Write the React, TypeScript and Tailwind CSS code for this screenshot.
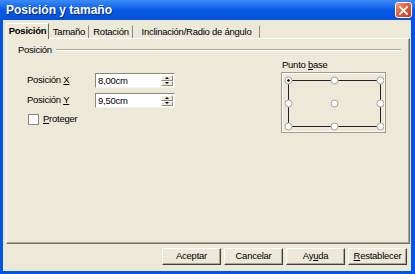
import React from 'react';

const font = { fontFamily: '"Liberation Sans", Arial, sans-serif' };

function Tab({ label, selected, width }: { label: string; selected?: boolean; width: string }) {
  return (
    <div
      className={`${width} flex items-center justify-center border-l border-t border-r whitespace-nowrap ${
        selected
          ? 'h-[16px] -mb-px z-10 bg-[#ece9d8] border-l-white border-t-white border-r-[#716f64] font-bold'
          : 'h-[13px] border-l-transparent border-t-transparent border-r-[#8d8b80]'
      }`}
    >
      {label}
    </div>
  );
}

function SpinField({ value }: { value: string }) {
  return (
    <div className="w-[80px] h-[15px] flex bg-white border border-t-[#8a887c] border-l-[#8a887c] border-b-[#f4f3ee] border-r-[#f4f3ee]">
      <div className="flex-1 pl-[2px] leading-[13px] text-black">{value}</div>
      <div className="w-[12px] flex flex-col my-px mr-px">
        <div className="flex-1 flex items-center justify-center bg-[#ece9d8] border border-t-white border-l-white border-b-[#8d8b80] border-r-[#8d8b80]">
          <div className="w-0 h-0 border-l-[2px] border-r-[2px] border-b-[2px] border-l-transparent border-r-transparent border-b-black" />
        </div>
        <div className="flex-1 flex items-center justify-center bg-[#ece9d8] border border-t-white border-l-white border-b-[#8d8b80] border-r-[#8d8b80]">
          <div className="w-0 h-0 border-l-[2px] border-r-[2px] border-t-[2px] border-l-transparent border-r-transparent border-t-black" />
        </div>
      </div>
    </div>
  );
}

function DlgButton({ children }: { children: React.ReactNode }) {
  return (
    <div className="w-[59px] h-[17px] flex items-center justify-center whitespace-nowrap bg-[#ece9d8] border border-t-white border-l-white border-b-[#403f3a] border-r-[#403f3a] shadow-[inset_-1px_-1px_0_#aca899]">
      {children}
    </div>
  );
}

export default function App() {
  const xs = [5, 51, 97];
  const ys = [6, 29, 52];
  const points: [number, number][] = [];
  ys.forEach((y) => xs.forEach((x) => points.push([x, y])));

  return (
    <div
      className="w-[415px] h-[274px] flex flex-col bg-[#0055e5] text-[9.5px] tracking-[-0.25px] text-black"
      style={font}
    >
      {/* title bar */}
      <div className="h-[20px] flex items-center justify-between pl-[6px] pr-[3px] bg-gradient-to-b from-[#3b8cf6] via-[#0859e6] to-[#0352db]">
        <span className="text-white font-bold text-[12px] tracking-normal [text-shadow:1px_1px_0_#0a2a80]">
          Posición y tamaño
        </span>
        <div className="w-[17px] h-[16px] rounded-[3px] border border-white bg-gradient-to-br from-[#f19a7d] via-[#e05a32] to-[#c33a12] flex items-center justify-center">
          <svg width="9" height="9" viewBox="0 0 9 9">
            <path d="M1 1 L8 8 M8 1 L1 8" stroke="white" strokeWidth="1.8" strokeLinecap="square" />
          </svg>
        </div>
      </div>

      {/* body */}
      <div className="flex-1 flex flex-col ml-[3px] mr-[4px] mb-[3px] bg-[#ece9d8] pl-[3px] pr-[1px]">
        <div className="flex items-end mt-[3px] h-[15px]">
          <Tab label="Posición" selected width="w-[43px]" />
          <Tab label="Tamaño" width="w-[40px]" />
          <Tab label="Rotación" width="w-[44px]" />
          <Tab label="Inclinación/Radio de ángulo" width="w-[127px]" />
        </div>

        <div className="h-[206px] flex flex-col border border-t-white border-l-white border-b-[#716f64] border-r-[#716f64] shadow-[inset_-1px_-1px_0_#aca899]">
          {/* group header */}
          <div className="flex items-center mt-[6px] h-[10px] pl-[11px] pr-[8px]">
            <span>Posición</span>
            <div className="flex-1 ml-[4px] h-[2px] border-t border-t-[#aca899] border-b border-b-white" />
          </div>

          <div className="flex">
            {/* left */}
            <div className="w-[180px] pl-[20px] pt-[18px] flex flex-col">
              <div className="flex items-center h-[15px]">
                <span className="w-[68px]">
                  Posición <u>X</u>
                </span>
                <SpinField value="8,00cm" />
              </div>
              <div className="flex items-center h-[15px] mt-[5px]">
                <span className="w-[68px]">
                  Posición <u>Y</u>
                </span>
                <SpinField value="9,50cm" />
              </div>
              <div className="flex items-center h-[11px] mt-[6px] pl-[1px]">
                <div className="w-[11px] h-[11px] bg-white border border-[#8a887c]" />
                <span className="ml-[4px]">
                  <u>P</u>roteger
                </span>
              </div>
            </div>

            {/* right */}
            <div className="ml-[94px] pt-[5px] flex flex-col">
              <div className="h-[10px] leading-[10px] pl-px">
                Punto <u>b</u>ase
              </div>
              <div className="mt-[2px] w-[105px] h-[61px] border border-[#9d9b8f] bg-[#ece9d8]">
                <div className="w-full h-full border border-t-white border-l-white border-b-[#f7f6f0] border-r-[#f7f6f0]">
                  <svg width="101" height="57" viewBox="0 0 101 57">
                    <rect x="5.5" y="6.5" width="92" height="46" fill="none" stroke="#222" strokeWidth="1" />
                    {points.map(([x, y], i) => (
                      <g key={i}>
                        <circle cx={x + 0.5} cy={y + 0.5} r="3.5" fill="white" stroke="#a6a499" strokeWidth="1" />
                        {i === 0 && <circle cx={x + 0.5} cy={y + 0.5} r="1.3" fill="black" />}
                      </g>
                    ))}
                  </svg>
                </div>
              </div>
            </div>
          </div>
        </div>

        {/* buttons */}
        <div className="flex justify-end gap-[3px] mt-[4px] pr-[3px]">
          <DlgButton>Aceptar</DlgButton>
          <DlgButton>Cancelar</DlgButton>
          <DlgButton>
            Ay<u>u</u>da
          </DlgButton>
          <DlgButton>
            <u>R</u>establecer
          </DlgButton>
        </div>
      </div>
    </div>
  );
}
